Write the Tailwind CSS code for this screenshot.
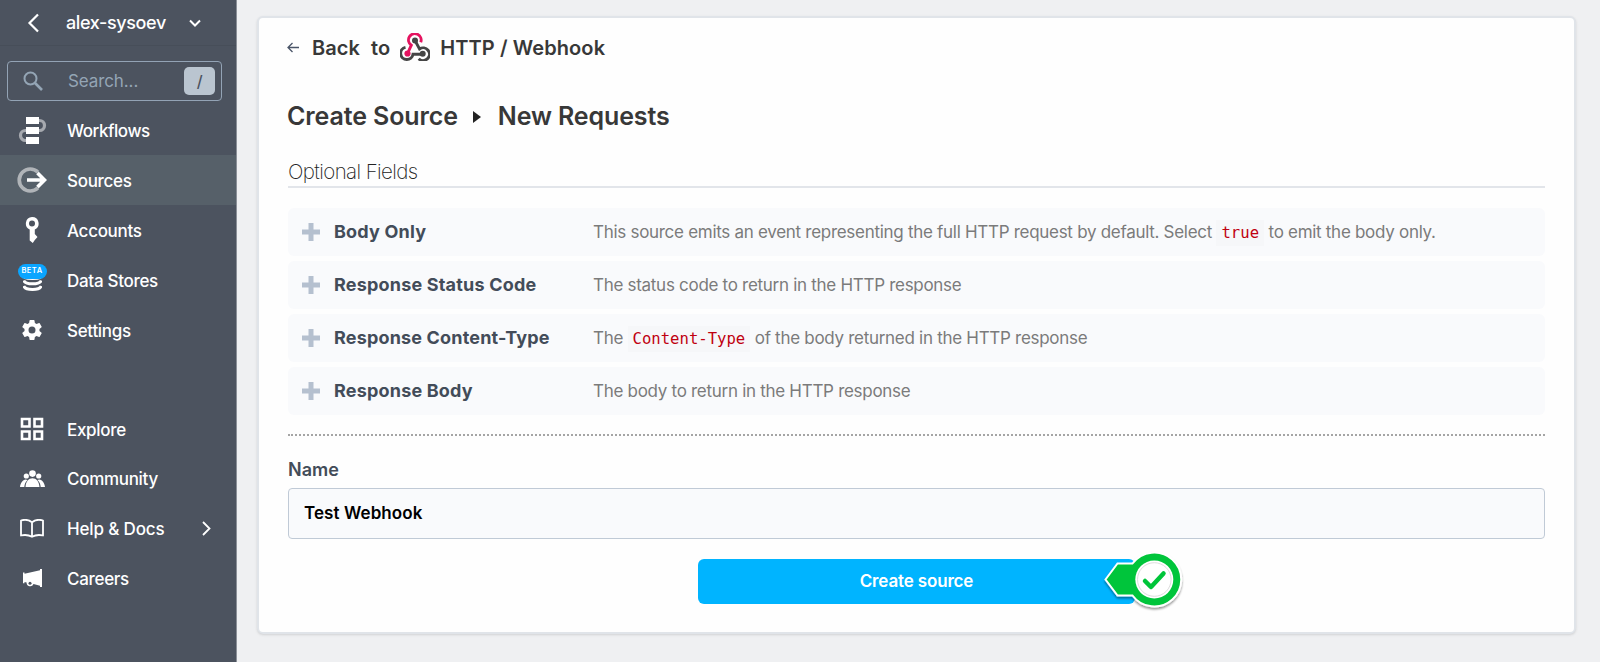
<!DOCTYPE html>
<html lang="en">
<head>
<meta charset="utf-8">
<title>Create Source</title>
<script src="https://cdn.jsdelivr.net/npm/@tailwindcss/browser@4"></script>
</head>
<body class="h-[662px] w-[1600px] overflow-hidden bg-[#eff0f2] font-['Inter',sans-serif] flex">
<aside class="h-full w-[237px] shrink-0 border-r border-[#8b9098] bg-[#4c535f] text-white text-[17px] font-medium tracking-[-0.3px]">
  <header class="flex h-[46px] items-center border-b border-[#474e59] pl-[27px]">
    <svg class="h-5 w-3" viewBox="0 0 12 20" fill="none" stroke="#fff" stroke-width="2.2"><path d="M11 1.5 2.5 10 11 18.500"/></svg>
    <span class="ml-[27px] text-[18px] tracking-[-0.38px]">alex-sysoev</span>
    <svg class="ml-[23px] h-2 w-3" viewBox="0 0 12 8" fill="none" stroke="#fff" stroke-width="2"><path d="m1 1.500 5 5 5-5"/></svg>
  </header>
  <div class="mt-[15px] ml-[7px] flex h-10 w-[215px] items-center rounded border border-[#93a3b5] pl-[15px] pr-[6px]">
    <svg class="size-5" viewBox="0 0 20 20" fill="none" stroke="#94a5b5" stroke-width="2"><circle cx="7.500" cy="7.500" r="6"/><path d="m12 12 7 7" stroke-width="2.600"/></svg>
    <span class="ml-[25px] pt-[2px] font-normal tracking-[-0.1px] text-[#94a5b5]">Search...</span>
    <span class="ml-auto flex h-7 w-[31px] items-center justify-center rounded-[5px] bg-[#bac5d0] text-[16px] text-[#4c535f]">/</span>
  </div>
  <nav class="mt-[5px]">
    <a class="flex h-[49px] items-center"><span class="flex w-[65px] justify-center pr-px"><svg class="h-[27px] w-[29px]" viewBox="0 0 29 27"><g fill="none" stroke="#a6a9af" stroke-width="3.200"><path d="M20 3.500h1.500a5 5 0 0 1 0 10H20M9 13.500H7.500a5 5 0 0 0 0 10H9"/></g><path fill="#fff" d="M8 0h13v7H8zM8 10h13v7H8zM8 20h13v7H8z"/></svg></span><span class="ml-[2px] pt-[3px] tracking-[-0.45px]">Workflows</span></a>
    <a class="flex h-[50px] items-center bg-[#566069]"><span class="flex w-[65px] justify-center pr-px"><svg class="h-[26px] w-[30px]" viewBox="0 0 30 26" fill="none"><path d="M21 5.200A11 11 0 1 0 21 20.800" stroke="#b0b4b8" stroke-width="3.700"/><path d="M10 13h17M20.500 6l7 7-7 7" stroke="#fff" stroke-width="3.600"/></svg></span><span class="ml-[2px] pt-[3px]">Sources</span></a>
    <a class="flex h-[50px] items-center"><span class="flex w-[65px] justify-center pr-px"><svg class="h-[26px] w-[14px]" viewBox="0 0 14 26"><path fill="#fff" fill-rule="evenodd" d="M7 0a6.500 6.500 0 0 1 2.800 12.400V17l2.700 3-2.700 3-2 3-3.100-2.500V12.400A6.500 6.500 0 0 1 7 0m0 3.400a3 3 0 1 0 0 6 3 3 0 0 0 0-6"/></svg></span><span class="ml-[2px] pt-[3px]">Accounts</span></a>
    <a class="flex h-[50px] items-center"><span class="flex w-[65px] flex-col items-center pr-px pb-[6px]"><span class="relative flex h-[15px] w-[29px] items-center justify-center rounded-full bg-[#0aa5ff] text-[7.500px] font-semibold tracking-[0.500px]">BETA</span><svg class="-mt-px h-[13px] w-[19px]" viewBox="0 0 19 13" fill="none" stroke="#fff" stroke-width="2.900"><path d="M1 0q3 1.300 8.500 1.300T18 0" stroke-width="1.500"/><path d="M.8 2.500q1 3.300 8.700 3.300t8.700-3.300M.8 8q1 3.500 8.700 3.500T18.200 8"/></svg></span><span class="ml-[2px] pt-[3px]">Data Stores</span></a>
    <a class="flex h-[50px] items-center"><span class="flex w-[65px] justify-center pr-px"><svg class="size-6" viewBox="0 0 24 24" fill="#fff"><path d="M19.430 12.980c.04-.32.07-.64.07-.98s-.03-.66-.07-.98l2.110-1.650a.5.5 0 0 0 .12-.64l-2-3.460a.5.5 0 0 0-.61-.22l-2.490 1a7.300 7.300 0 0 0-1.690-.98l-.38-2.650A.49.49 0 0 0 14 2h-4a.49.49 0 0 0-.49.420l-.38 2.650c-.61.25-1.170.59-1.690.98l-2.490-1a.49.49 0 0 0-.61.220l-2 3.460a.49.49 0 0 0 .12.640l2.110 1.650c-.04.32-.07.65-.07.980s.03.660.07.980l-2.110 1.650a.5.500 0 0 0-.12.640l2 3.460c.12.220.39.300.61.220l2.490-1c.52.400 1.080.730 1.690.980l.38 2.650c.03.240.24.420.49.420h4c.25 0 .46-.18.490-.42l.38-2.650a7.300 7.300 0 0 0 1.690-.98l2.490 1c.23.090.49 0 .61-.22l2-3.460a.5.500 0 0 0-.12-.64zM12 15.500a3.500 3.500 0 1 1 0-7 3.500 3.500 0 0 1 0 7"/></svg></span><span class="ml-[2px] pt-[3px]">Settings</span></a>
    <a class="mt-[49px] flex h-[50px] items-center"><span class="flex w-[65px] justify-center pr-px"><svg class="size-6" viewBox="0 0 24 24" fill="none" stroke="#fff" stroke-width="2.600"><path d="M2 2h7.500v7.500H2zM14.500 2H22v7.500h-7.500zM2 14.500h7.500V22H2zM14.500 14.500H22V22h-7.500z"/></svg></span><span class="ml-[2px] pt-[3px]">Explore</span></a>
    <a class="flex h-[49px] items-center"><span class="flex w-[65px] justify-center pr-px"><svg class="h-[17px] w-[25px]" viewBox="0 0 25 17" fill="#fff"><circle cx="12.500" cy="3.600" r="3.300"/><circle cx="6.300" cy="6" r="2.600"/><circle cx="18.700" cy="6" r="2.600"/><path d="M5.500 17c.4-5.500 3.200-8.800 7-8.800s6.600 3.300 7 8.800zM0 17c.5-4.200 2.500-7 5.800-7.600L7.500 10C5.600 11.700 4.500 14 4.300 17zM25 17c-.5-4.200-2.500-7-5.800-7.600l-1.700.6c1.900 1.700 3 4 3.200 7z"/></svg></span><span class="ml-[2px] pt-[3px]">Community</span></a>
    <a class="flex h-[50px] items-center"><span class="flex w-[65px] justify-center pr-px"><svg class="h-[19px] w-6" viewBox="0 0 24 19" fill="none" stroke="#fff" stroke-width="1.800" stroke-linejoin="round"><path d="M12 3.200Q7-.5 1 1.500v15q6-1.500 11 1.300 5-2.800 11-1.300v-15q-6-2-11 1.700zv14.500"/></svg></span><span class="ml-[2px] pt-[3px] tracking-[-0.15px]">Help &amp; Docs</span><svg class="ml-[38px] h-[15px] w-[9px]" viewBox="0 0 9 15" fill="none" stroke="#fff" stroke-width="1.800"><path d="m1 1 6.500 6.500L1 14"/></svg></a>
    <a class="flex h-[50px] items-center"><span class="flex w-[65px] justify-center pr-px"><svg class="h-[19px] w-[19px]" viewBox="0 0 19 19"><path fill="#fff" d="M0 3.500h1.500v1.200L17 1.200V0h2v18h-2v-1.300l-6.500-1.600a3.600 3.600 0 0 1-6.900-1.600l-2.100-.4v1.100H0z"/><circle cx="7" cy="14.200" r="1.500" fill="#4c535f"/></svg></span><span class="ml-[2px] pt-[3px]">Careers</span></a>
  </nav>
</aside>
<main class="flex-1 pt-4 pl-5 pr-6">
  <section class="h-[618px] w-[1319px] rounded-md border-2 border-[#e0e4e9] bg-[#fefefe] px-[29px] pt-[13px] shadow-sm">
    <div class="flex h-8 items-center text-[20px] font-semibold text-[#383838]">
      <svg class="-ml-px h-[11px] w-3" viewBox="0 0 12 11" fill="none" stroke="#4a5568" stroke-width="1.300"><path d="M12 5.500H1M5.500 1 1 5.500 5.500 10"/></svg>
      <span class="ml-[13px] pt-px tracking-[0.1px]">Back</span><span class="ml-[11px] pt-px">to</span>
      <svg class="ml-[10px] h-[28px] w-[30px]" viewBox="0 0 30 28" fill="none" stroke-width="2.900"><g stroke="#e5135f"><path d="M20.700 9.300A6.300 6.300 0 1 0 11.300 12.200L8 19.500"/></g><g stroke="#454545"><path d="M5.500 14.300A6.200 6.200 0 1 0 13 21.300h9"/><path d="M15 7.500 19.500 16a6.300 6.300 0 1 1-.8 9.700"/></g><circle cx="7.500" cy="20.500" r="3.100" fill="#e5135f"/><circle cx="15" cy="7.500" r="3" fill="#454545"/><circle cx="22.700" cy="20.700" r="3" fill="#454545"/></svg>
      <span class="ml-[10px] pt-px tracking-[0.1px]">HTTP / Webhook</span>
    </div>
    <div class="mt-8 flex h-11 items-center text-[25px] font-semibold tracking-[-0.12px] text-[#383838]">
      <span class="-ml-px">Create Source</span>
      <svg class="ml-[15px] h-3 w-2" viewBox="0 0 8 12"><path fill="#222" d="M0 0l8 6-8 6z"/></svg>
      <span class="ml-[17px]">New Requests</span>
    </div>
    <div class="mt-[15px] flex h-[34px] items-center border-b-2 border-[#e2e5ea] pt-[4px] text-[20.500px] font-extralight tracking-[-0.6px] text-[#222]"><span>Optional Fields</span></div>
    <div class="mt-5 flex flex-col gap-[5px] text-[17px] tracking-[-0.29px] text-[#7b7b7b]">
      <div class="flex h-12 items-center rounded-md bg-[#f9fafc] pl-[14px]"><svg class="size-[18px] mr-[14px]" viewBox="0 0 18 18"><path fill="#b5c0cf" d="M6.500 0h5v6.500H18v5h-6.500V18h-5v-6.500H0v-5h6.500z"/></svg><span class="w-[259px] pb-[2px] text-[18px] font-bold tracking-[0.19px] text-[#434c59]">Body Only</span><span class="pt-px">This source emits an event representing the full HTTP request by default. Select <code class="bg-[#f6f7f9] px-[5px] py-1 font-['DejaVu_Sans_Mono',monospace] text-[15.600px] tracking-normal text-[#c00010]">true</code> to emit the body only.</span></div>
      <div class="flex h-12 items-center rounded-md bg-[#f9fafc] pl-[14px]"><svg class="size-[18px] mr-[14px]" viewBox="0 0 18 18"><path fill="#b5c0cf" d="M6.500 0h5v6.500H18v5h-6.500V18h-5v-6.500H0v-5h6.500z"/></svg><span class="w-[259px] pb-[2px] text-[18px] font-bold tracking-[0.19px] text-[#434c59]">Response Status Code</span><span class="pt-px">The status code to return in the HTTP response</span></div>
      <div class="flex h-12 items-center rounded-md bg-[#f9fafc] pl-[14px]"><svg class="size-[18px] mr-[14px]" viewBox="0 0 18 18"><path fill="#b5c0cf" d="M6.500 0h5v6.500H18v5h-6.500V18h-5v-6.500H0v-5h6.500z"/></svg><span class="w-[259px] pb-[2px] text-[18px] font-bold tracking-[0.17px] text-[#434c59]">Response Content-Type</span><span class="pt-px">The <code class="bg-[#f6f7f9] px-[5px] py-1 font-['DejaVu_Sans_Mono',monospace] text-[15.600px] tracking-normal text-[#c00010]">Content-Type</code> of the body returned in the HTTP response</span></div>
      <div class="flex h-12 items-center rounded-md bg-[#f9fafc] pl-[14px]"><svg class="size-[18px] mr-[14px]" viewBox="0 0 18 18"><path fill="#b5c0cf" d="M6.500 0h5v6.500H18v5h-6.500V18h-5v-6.500H0v-5h6.500z"/></svg><span class="w-[259px] pb-[2px] text-[18px] font-bold tracking-[0.19px] text-[#434c59]">Response Body</span><span class="pt-px">The body to return in the HTTP response</span></div>
    </div>
    <div class="mt-[19px] border-t-2 border-dotted border-[#a5a5a5]"></div>
    <div class="mt-5 flex h-[27px] items-center text-[18px] font-semibold text-[#434c59]"><span>Name</span></div>
    <div class="mt-[5px] flex h-[51px] items-center rounded border border-[#c0cad6] bg-[#f9fafc] pl-[15px] text-[17px] font-semibold tracking-[0.08px] text-black"><span>Test Webhook</span></div>
    <div class="relative mx-auto mt-5 flex h-[45px] w-[437px] items-center justify-center rounded-md bg-[#00b4ff] text-[17px] font-semibold tracking-[-0.15px] text-white"><span>Create source</span>
      <svg class="absolute -right-[50px] -top-[9px] h-[64px] w-[84px]" viewBox="0 0 84 64">
        <defs><filter id="s" x="-20%" y="-20%" width="140%" height="140%"><feDropShadow dx="0" dy="2" stdDeviation="1.300" flood-color="#000" flood-opacity=".4"/></filter></defs>
        <path filter="url(#s)" fill="#00c53a" stroke="#fff" stroke-width="2" d="M4.500 29.500 16.500 13.500H31.500A27 27 0 1 1 31.500 45.500H16.500z"/>
        <circle cx="53.300" cy="29.500" r="19" fill="#fff"/>
        <circle cx="53.300" cy="29.500" r="16.800" fill="#fff" stroke="#ddd" stroke-width="1"/>
        <path fill="none" stroke="#00c53a" stroke-width="4.500" stroke-linecap="round" stroke-linejoin="round" d="m44 31 6 6L62.500 23.500"/>
      </svg>
    </div>
  </section>
</main>
</body>
</html>
